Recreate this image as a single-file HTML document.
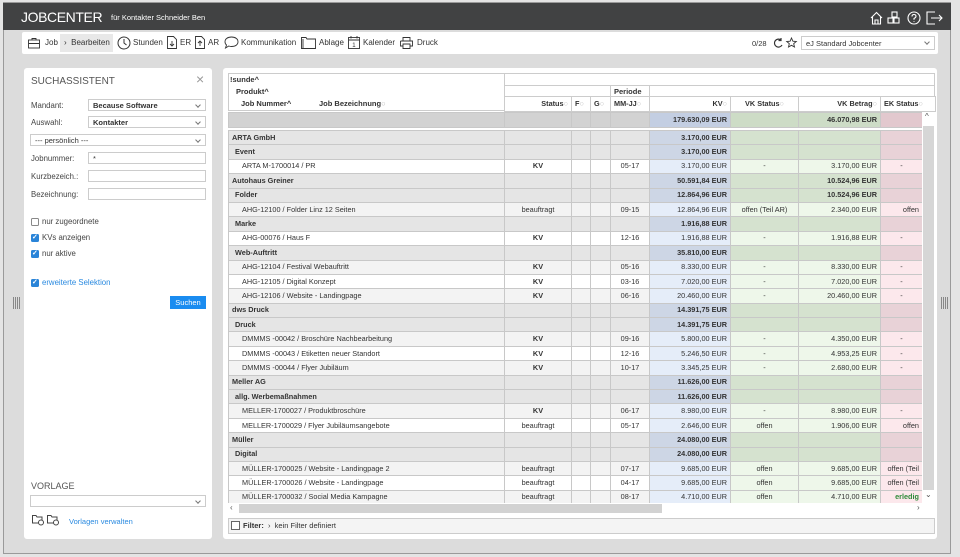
<!DOCTYPE html>
<html><head><meta charset="utf-8"><style>
*{box-sizing:border-box;margin:0;padding:0}
body{width:960px;height:557px;background:#e4e4e4;font-family:"Liberation Sans",sans-serif;font-size:7.5px;color:#333;position:relative;overflow:hidden}
.abs{position:absolute}
#frame{left:3px;top:2px;width:948px;height:552px;border:1px solid #9a9a9a;background:#dcdcdc}
#hdr{left:3px;top:3px;width:948px;height:27px;background:#414243;color:#fff}
#tb{left:22px;top:32px;width:916px;height:22px;background:#fff;border-radius:2px}
.ti{position:absolute;top:6px;font-size:8px;color:#333}
.panel{background:#fff;border-radius:3px}
.lbl{position:absolute;left:31px;font-size:7.8px;color:#444}
.inp{position:absolute;left:88px;width:118px;height:12px;border:1px solid #ccc;background:#fff;font-size:7.5px;padding:1px 4px;color:#333}
.sel:after{content:"";position:absolute;right:5px;top:3px;width:3px;height:3px;border-right:1px solid #777;border-bottom:1px solid #777;transform:rotate(45deg)}
.cb{position:absolute;left:31px;width:8px;height:8px;border-radius:1.5px}
.cb.on{background:#2a84d8}
.cb.on:after{content:"✓";color:#fff;font-size:7px;position:absolute;left:1px;top:-1px;font-weight:bold}
.cb.off{border:1px solid #888;background:#fff}
.cbl{position:absolute;left:42px;font-size:7.8px;color:#444}
table{border-collapse:collapse;table-layout:fixed;position:absolute;left:228px}
td{border:1px solid #c8c8c8;height:14.4px;padding:0 3px;white-space:nowrap;overflow:hidden;font-size:7.3px;line-height:12px}
.g td{background:#e5e5e5;font-weight:bold}
.g td.kv{background:#cdd6e5}.g td.vk{background:#d5e2cf}.g td.ek{background:#e8d2d7}
.d td{background:#fff}.d.alt td{background:#f3f3f3}
.d td.kv{background:#e5edf9}.d td.vk{background:#eef7ea}.d td.ek{background:#fce8ec}
.r{text-align:right}.c{text-align:center}.b{font-weight:bold}
.i1{padding-left:6px}.i2{padding-left:13px}
.h td{border:1px solid #ccc;background:#fff;font-weight:bold;height:12px}
</style></head><body>
<div id="frame" class="abs"></div>
<div id="hdr" class="abs">
 <div class="abs" style="left:18px;top:6px;font-size:14px;letter-spacing:-0.4px">JOBCENTER</div>
 <div class="abs" style="left:108px;top:10px;font-size:7.5px">für Kontakter Schneider Ben</div>
 <svg class="abs" style="left:866px;top:7px" width="75" height="16" fill="none" stroke="#fff" stroke-width="1.1">
  <path d="M2 8 L7.5 2.5 L13 8 M3.5 7 V14 H11.5 V7 M6 14 V10 H9 V14"/>
  <rect x="23" y="2" width="5" height="5"/><rect x="19" y="8" width="5" height="5"/><rect x="25" y="8" width="5" height="5"/>
  <circle cx="45" cy="8" r="6"/><path d="M43 6.5 Q43 4.5 45 4.5 Q47 4.5 47 6.3 Q47 7.5 45 8.5 V9.8 M45 11 V11.8"/>
  <path d="M66 2 H58 V14 H66 M62 8 H73 M70 5 L73 8 L70 11"/>
 </svg>
</div>
<div id="tb" class="abs">
 <svg class="abs" style="left:6px;top:5px" width="12" height="12" fill="none" stroke="#333" stroke-width="0.9"><rect x="0.5" y="3" width="11" height="8"/><path d="M4 3V1.5H8V3 M0.5 6.5H11.5"/></svg>
 <span class="ti" style="left:23px">Job</span>
 <div class="abs" style="left:38px;top:2px;width:53px;height:18px;background:#e8e8e8"></div>
 <span class="ti" style="left:42px">›&nbsp; Bearbeiten</span>
 <svg class="abs" style="left:95px;top:4px" width="14" height="14" fill="none" stroke="#333" stroke-width="1"><circle cx="7" cy="7" r="6"/><path d="M7 3V7L9.5 9"/></svg>
 <span class="ti" style="left:111px">Stunden</span>
 <svg class="abs" style="left:145px;top:4px" width="10" height="13" fill="none" stroke="#333" stroke-width="0.9"><path d="M0.5 0.5H6.5L9.5 3.5V12.5H0.5Z M5 5V10 M3 8L5 10L7 8"/></svg>
 <span class="ti" style="left:158px">ER</span>
 <svg class="abs" style="left:173px;top:4px" width="10" height="13" fill="none" stroke="#333" stroke-width="0.9"><path d="M0.5 0.5H6.5L9.5 3.5V12.5H0.5Z M5 5V10 M3 7L5 5L7 7"/></svg>
 <span class="ti" style="left:186px">AR</span>
 <svg class="abs" style="left:202px;top:4px" width="15" height="13" fill="none" stroke="#333" stroke-width="0.9"><path d="M7.5 1C11.5 1 14 3 14 5.8C14 8.6 11.5 10.5 7.5 10.5C6.5 10.5 5.5 10.3 4.8 10L1.5 12L2.5 9C1.5 8.2 1 7 1 5.8C1 3 3.5 1 7.5 1Z"/></svg>
 <span class="ti" style="left:219px">Kommunikation</span>
 <svg class="abs" style="left:279px;top:5px" width="15" height="12" fill="none" stroke="#333" stroke-width="0.9"><path d="M0.5 0.5H5L6 2H14.5V11.5H0.5Z M2 2V11.5"/></svg>
 <span class="ti" style="left:297px">Ablage</span>
 <svg class="abs" style="left:326px;top:4px" width="12" height="13" fill="none" stroke="#333" stroke-width="0.9"><rect x="0.5" y="1.5" width="11" height="11"/><path d="M0.5 4H11.5 M3 0V2.5 M9 0V2.5"/><text x="4.3" y="11" font-size="6" fill="#333" stroke="none" font-family="Liberation Sans">1</text></svg>
 <span class="ti" style="left:341px">Kalender</span>
 <svg class="abs" style="left:378px;top:5px" width="13" height="12" fill="none" stroke="#333" stroke-width="0.9"><path d="M3 4V0.5H10V4 M0.5 4H12.5V9H10 M3 9H0.5V4 M3 7H10V11.5H3Z"/></svg>
 <span class="ti" style="left:395px">Druck</span>
 <span class="ti" style="left:730px;font-size:7.5px;top:7px">0/28</span>
 <svg class="abs" style="left:750px;top:5px" width="26" height="12" fill="none" stroke="#333" stroke-width="1.2"><path d="M9 3A4 4 0 1 0 10 8 M9 1V3.5H6.5"/><path d="M19.5 1L20.9 4.2L24.3 4.5L21.7 6.7L22.5 10L19.5 8.3L16.5 10L17.3 6.7L14.7 4.5L18.1 4.2Z" stroke-width="0.9"/></svg>
 <div class="abs sel" style="left:779px;top:4px;width:134px;height:14px;border:1px solid #ccc;font-size:7.5px;padding:2px 4px">eJ Standard Jobcenter</div>
</div>
<div class="abs" style="left:13px;top:297px;width:8px;height:12px;background:repeating-linear-gradient(90deg,#888 0 1px,transparent 1px 2px)"></div>
<div class="abs" style="left:941px;top:297px;width:8px;height:12px;background:repeating-linear-gradient(90deg,#888 0 1px,transparent 1px 2px)"></div>
<div class="abs panel" style="left:24px;top:68px;width:188px;height:471px">
 <div class="abs" style="left:7px;top:8px;font-size:10px;color:#555">SUCHASSISTENT</div>
 <div class="abs" style="left:172px;top:3px;font-size:14px;color:#999">×</div>
</div>
<div class="lbl" style="top:101px">Mandant:</div><div class="inp sel" style="top:99px;font-weight:bold">Because Software</div>
<div class="lbl" style="top:118px">Auswahl:</div><div class="inp sel" style="top:116px;font-weight:bold">Kontakter</div>
<div class="inp sel" style="top:134px;left:30px;width:176px">--- persönlich ---</div>
<div class="lbl" style="top:154px">Jobnummer:</div><div class="inp" style="top:152px">*</div>
<div class="lbl" style="top:172px">Kurzbezeich.:</div><div class="inp" style="top:170px"></div>
<div class="lbl" style="top:190px">Bezeichnung:</div><div class="inp" style="top:188px"></div>
<div class="cb off" style="top:218px"></div><div class="cbl" style="top:217px">nur zugeordnete</div>
<div class="cb on" style="top:234px"></div><div class="cbl" style="top:233px">KVs anzeigen</div>
<div class="cb on" style="top:250px"></div><div class="cbl" style="top:249px">nur aktive</div>
<div class="cb on" style="top:279px"></div><div class="cbl" style="top:278px;color:#2a8ae0">erweiterte Selektion</div>
<div class="abs" style="left:170px;top:296px;width:36px;height:13px;background:#1a8cf0;color:#fff;font-size:7.5px;text-align:center;line-height:13px">Suchen</div>
<div class="abs" style="left:31px;top:481px;font-size:9px;color:#555">VORLAGE</div>
<div class="inp sel" style="top:495px;left:30px;width:176px"></div>
<svg class="abs" style="left:32px;top:514px" width="28" height="12" fill="none" stroke="#444" stroke-width="1"><path d="M0.5 1.5H4L5 3H10V9H0.5Z"/><circle cx="9" cy="8.5" r="2.5" fill="#fff"/><path d="M15.5 1.5H19L20 3H25V9H15.5Z"/><circle cx="24" cy="8.5" r="2.5" fill="#fff"/></svg>
<div class="abs" style="left:69px;top:517px;font-size:7.5px;color:#2a8ae0">Vorlagen verwalten</div>
<div class="abs panel" style="left:223px;top:68px;width:714px;height:471px"></div>
<div class="abs" style="left:228px;top:73px;width:707px;height:38px;border:1px solid #ccc;background:#fff"></div>
<div class="abs" style="left:504px;top:85px;width:431px;height:1px;background:#ccc"></div>
<div class="abs" style="left:504px;top:96px;width:431px;height:1px;background:#ccc"></div>
<div class="abs" style="left:504px;top:73px;width:1px;height:38px;background:#ccc"></div>
<div class="abs" style="left:610px;top:85px;width:1px;height:26px;background:#ccc"></div>
<div class="abs" style="left:649px;top:85px;width:1px;height:26px;background:#ccc"></div>
<div class="abs b" style="left:230px;top:75px">!sunde^</div>
<div class="abs b" style="left:236px;top:87px">Produkt^</div>
<div class="abs b" style="left:241px;top:99px">Job Nummer^</div>
<div class="abs b" style="left:319px;top:99px">Job Bezeichnung<span style="color:#bbb">○</span></div>
<div class="abs b" style="left:614px;top:87px">Periode</div>
<table class="h" style="top:96px;left:504px">
<colgroup><col style="width:67px"><col style="width:19px"><col style="width:20px"><col style="width:39px"><col style="width:81px"><col style="width:68px"><col style="width:82px"><col style="width:55px"></colgroup>
<tr><td class="r" style="height:15px">Status<span style="color:#bbb">○</span></td><td>F<span style="color:#bbb">○</span></td><td>G<span style="color:#bbb">○</span></td><td>MM-JJ<span style="color:#bbb">○</span></td><td class="r">KV<span style="color:#bbb">○</span></td><td class="c">VK Status<span style="color:#bbb">○</span></td><td class="r">VK Betrag<span style="color:#bbb">○</span></td><td>EK Status<span style="color:#bbb">○</span></td></tr>
</table>
<table style="top:112px">
<colgroup><col style="width:276px"><col style="width:67px"><col style="width:19px"><col style="width:20px"><col style="width:39px"><col style="width:81px"><col style="width:68px"><col style="width:82px"><col style="width:42px"></colgroup>
<tr class="g"><td style="background:#d2d2d2;height:15px"></td><td style="background:#d2d2d2"></td><td style="background:#d2d2d2"></td><td style="background:#d2d2d2"></td><td style="background:#d2d2d2"></td><td class="r" style="background:#c3cee2">179.630,09 EUR</td><td style="background:#cddcc6"></td><td class="r" style="background:#cddcc6">46.070,98 EUR</td><td style="background:#e2c8ce"></td></tr>
</table>
<table style="top:130px">
<colgroup><col style="width:276px"><col style="width:67px"><col style="width:19px"><col style="width:20px"><col style="width:39px"><col style="width:81px"><col style="width:68px"><col style="width:82px"><col style="width:42px"></colgroup>
<tr class="g"><td>ARTA GmbH</td><td></td><td></td><td></td><td></td><td class="kv r">3.170,00 EUR</td><td class="vk"></td><td class="vk r"></td><td class="ek"></td></tr>
<tr class="g"><td class="i1">Event</td><td></td><td></td><td></td><td></td><td class="kv r">3.170,00 EUR</td><td class="vk"></td><td class="vk r"></td><td class="ek"></td></tr>
<tr class="d"><td class="i2">ARTA M-1700014 / PR</td><td class="c b">KV</td><td></td><td></td><td class="c">05-17</td><td class="kv r">3.170,00 EUR</td><td class="vk c">-</td><td class="vk r">3.170,00 EUR</td><td class="ek c">-</td></tr>
<tr class="g"><td>Autohaus Greiner</td><td></td><td></td><td></td><td></td><td class="kv r">50.591,84 EUR</td><td class="vk"></td><td class="vk r">10.524,96 EUR</td><td class="ek"></td></tr>
<tr class="g"><td class="i1">Folder</td><td></td><td></td><td></td><td></td><td class="kv r">12.864,96 EUR</td><td class="vk"></td><td class="vk r">10.524,96 EUR</td><td class="ek"></td></tr>
<tr class="d alt"><td class="i2">AHG-12100 / Folder Linz 12 Seiten</td><td class="c">beauftragt</td><td></td><td></td><td class="c">09-15</td><td class="kv r">12.864,96 EUR</td><td class="vk c">offen (Teil AR)</td><td class="vk r">2.340,00 EUR</td><td class="ek r">offen</td></tr>
<tr class="g"><td class="i1">Marke</td><td></td><td></td><td></td><td></td><td class="kv r">1.916,88 EUR</td><td class="vk"></td><td class="vk r"></td><td class="ek"></td></tr>
<tr class="d"><td class="i2">AHG-00076 / Haus F</td><td class="c b">KV</td><td></td><td></td><td class="c">12-16</td><td class="kv r">1.916,88 EUR</td><td class="vk c">-</td><td class="vk r">1.916,88 EUR</td><td class="ek c">-</td></tr>
<tr class="g"><td class="i1">Web-Auftritt</td><td></td><td></td><td></td><td></td><td class="kv r">35.810,00 EUR</td><td class="vk"></td><td class="vk r"></td><td class="ek"></td></tr>
<tr class="d alt"><td class="i2">AHG-12104 / Festival Webauftritt</td><td class="c b">KV</td><td></td><td></td><td class="c">05-16</td><td class="kv r">8.330,00 EUR</td><td class="vk c">-</td><td class="vk r">8.330,00 EUR</td><td class="ek c">-</td></tr>
<tr class="d"><td class="i2">AHG-12105 / Digital Konzept</td><td class="c b">KV</td><td></td><td></td><td class="c">03-16</td><td class="kv r">7.020,00 EUR</td><td class="vk c">-</td><td class="vk r">7.020,00 EUR</td><td class="ek c">-</td></tr>
<tr class="d alt"><td class="i2">AHG-12106 / Website - Landingpage</td><td class="c b">KV</td><td></td><td></td><td class="c">06-16</td><td class="kv r">20.460,00 EUR</td><td class="vk c">-</td><td class="vk r">20.460,00 EUR</td><td class="ek c">-</td></tr>
<tr class="g"><td>dws Druck</td><td></td><td></td><td></td><td></td><td class="kv r">14.391,75 EUR</td><td class="vk"></td><td class="vk r"></td><td class="ek"></td></tr>
<tr class="g"><td class="i1">Druck</td><td></td><td></td><td></td><td></td><td class="kv r">14.391,75 EUR</td><td class="vk"></td><td class="vk r"></td><td class="ek"></td></tr>
<tr class="d alt"><td class="i2">DMMMS -00042 / Broschüre Nachbearbeitung</td><td class="c b">KV</td><td></td><td></td><td class="c">09-16</td><td class="kv r">5.800,00 EUR</td><td class="vk c">-</td><td class="vk r">4.350,00 EUR</td><td class="ek c">-</td></tr>
<tr class="d"><td class="i2">DMMMS -00043 / Etiketten neuer Standort</td><td class="c b">KV</td><td></td><td></td><td class="c">12-16</td><td class="kv r">5.246,50 EUR</td><td class="vk c">-</td><td class="vk r">4.953,25 EUR</td><td class="ek c">-</td></tr>
<tr class="d alt"><td class="i2">DMMMS -00044 / Flyer Jubiläum</td><td class="c b">KV</td><td></td><td></td><td class="c">10-17</td><td class="kv r">3.345,25 EUR</td><td class="vk c">-</td><td class="vk r">2.680,00 EUR</td><td class="ek c">-</td></tr>
<tr class="g"><td>Meller AG</td><td></td><td></td><td></td><td></td><td class="kv r">11.626,00 EUR</td><td class="vk"></td><td class="vk r"></td><td class="ek"></td></tr>
<tr class="g"><td class="i1">allg. Werbemaßnahmen</td><td></td><td></td><td></td><td></td><td class="kv r">11.626,00 EUR</td><td class="vk"></td><td class="vk r"></td><td class="ek"></td></tr>
<tr class="d alt"><td class="i2">MELLER-1700027 / Produktbroschüre</td><td class="c b">KV</td><td></td><td></td><td class="c">06-17</td><td class="kv r">8.980,00 EUR</td><td class="vk c">-</td><td class="vk r">8.980,00 EUR</td><td class="ek c">-</td></tr>
<tr class="d"><td class="i2">MELLER-1700029 / Flyer Jubiläumsangebote</td><td class="c">beauftragt</td><td></td><td></td><td class="c">05-17</td><td class="kv r">2.646,00 EUR</td><td class="vk c">offen</td><td class="vk r">1.906,00 EUR</td><td class="ek r">offen</td></tr>
<tr class="g"><td>Müller</td><td></td><td></td><td></td><td></td><td class="kv r">24.080,00 EUR</td><td class="vk"></td><td class="vk r"></td><td class="ek"></td></tr>
<tr class="g"><td class="i1">Digital</td><td></td><td></td><td></td><td></td><td class="kv r">24.080,00 EUR</td><td class="vk"></td><td class="vk r"></td><td class="ek"></td></tr>
<tr class="d alt"><td class="i2">MÜLLER-1700025 / Website - Landingpage 2</td><td class="c">beauftragt</td><td></td><td></td><td class="c">07-17</td><td class="kv r">9.685,00 EUR</td><td class="vk c">offen</td><td class="vk r">9.685,00 EUR</td><td class="ek r">offen (Teil</td></tr>
<tr class="d"><td class="i2">MÜLLER-1700026 / Website - Landingpage</td><td class="c">beauftragt</td><td></td><td></td><td class="c">04-17</td><td class="kv r">9.685,00 EUR</td><td class="vk c">offen</td><td class="vk r">9.685,00 EUR</td><td class="ek r">offen (Teil</td></tr>
<tr class="d alt"><td class="i2">MÜLLER-1700032 / Social Media Kampagne</td><td class="c">beauftragt</td><td></td><td></td><td class="c">08-17</td><td class="kv r">4.710,00 EUR</td><td class="vk c">offen</td><td class="vk r">4.710,00 EUR</td><td class="ek r b" style="color:#2e8b3a">erledig</td></tr>
</table>
<div class="abs" style="left:922px;top:112px;width:13px;height:391px;background:#fff"></div>
<div class="abs" style="left:923px;top:126px;width:11px;height:364px;background:#d6d6d6"></div>
<div class="abs" style="left:925px;top:112px;font-size:8px;color:#555">^</div>
<div class="abs" style="left:925px;top:490px;font-size:8px;color:#555">⌄</div>
<div class="abs" style="left:228px;top:503px;width:707px;height:11px;background:#fff"></div>
<div class="abs" style="left:239px;top:504px;width:423px;height:9px;background:#d2d2d2"></div>
<div class="abs" style="left:230px;top:503px;font-size:8px;color:#555">‹</div>
<div class="abs" style="left:917px;top:503px;font-size:8px;color:#555">›</div>
<div class="abs" style="left:228px;top:518px;width:707px;height:16px;border:1px solid #ccc;background:#f4f4f4"></div>
<div class="abs" style="left:231px;top:521px;width:9px;height:9px;border:1px solid #666;background:#fff"></div>
<div class="abs" style="left:243px;top:521px;font-size:7.5px"><b>Filter:</b> &nbsp;›&nbsp; kein Filter definiert</div>
</body></html>
